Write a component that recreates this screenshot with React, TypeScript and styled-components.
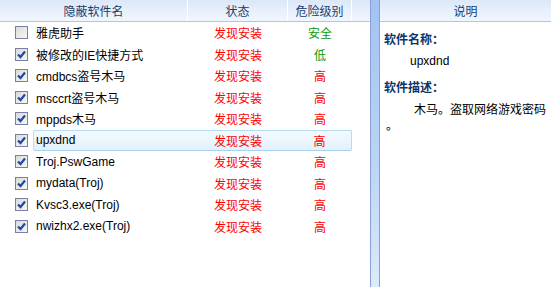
import styled, { createGlobalStyle } from "styled-components";
import { FC } from "react";

const GlobalStyle = createGlobalStyle`
  html, body {
    margin: 0;
    padding: 0;
    background: #ffffff;
  }
  body {
    font-family: "Liberation Sans", "Noto Sans CJK SC", sans-serif;
    font-size: 12px;
  }
`;

interface Item {
  name: string;
  checked: boolean;
  level: string;
  safe?: boolean;
  selected?: boolean;
}

const items: Item[] = [
  { name: "雅虎助手", checked: false, level: "安全", safe: true },
  { name: "被修改的IE快捷方式", checked: true, level: "低", safe: true },
  { name: "cmdbcs盗号木马", checked: true, level: "高" },
  { name: "msccrt盗号木马", checked: true, level: "高" },
  { name: "mppds木马", checked: true, level: "高" },
  { name: "upxdnd", checked: true, level: "高", selected: true },
  { name: "Troj.PswGame", checked: true, level: "高" },
  { name: "mydata(Troj)", checked: true, level: "高" },
  { name: "Kvsc3.exe(Troj)", checked: true, level: "高" },
  { name: "nwizhx2.exe(Troj)", checked: true, level: "高" },
];

const CheckBox: FC<{ checked: boolean }> = ({ checked }) => (
  <Box>
    {checked && (
      <svg width="9" height="9" viewBox="0 0 9 9">
        <path d="M1 4.5 L3.5 7 L8 1.5" stroke="#2148a8" strokeWidth="2.2" fill="none" />
      </svg>
    )}
  </Box>
);

export default function App() {
  return (
    <>
      <GlobalStyle />
      <Window>
        <ListPanel>
          <HeaderBar>
            <HeadCell $w={188}>隐蔽软件名</HeadCell>
            <HeadCell $w={100}>状态</HeadCell>
            <HeadCell $w={64}>危险级别</HeadCell>
            <HeadCell $w={18} />
          </HeaderBar>
          <Rows>
            {items.map((it) => (
              <Row key={it.name}>
                <NameCell>
                  <CheckBox checked={it.checked} />
                  <Name $selected={it.selected}>{it.name}</Name>
                </NameCell>
                <StatusCell $selected={it.selected}>发现安装</StatusCell>
                <LevelCell $safe={it.safe} $selected={it.selected}>
                  {it.level}
                </LevelCell>
              </Row>
            ))}
          </Rows>
        </ListPanel>
        <Splitter />
        <InfoPanel>
          <HeaderBar>
            <HeadCell $w={171}>说明</HeadCell>
          </HeaderBar>
          <InfoBody>
            <Label>软件名称：</Label>
            <Value>upxdnd</Value>
            <Label>软件描述：</Label>
            <Desc>木马。盗取网络游戏密码。</Desc>
          </InfoBody>
        </InfoPanel>
      </Window>
    </>
  );
}

const Window = styled.div`
  display: flex;
  width: 551px;
  height: 287px;
  background: #ffffff;
`;

const ListPanel = styled.div`
  width: 370px;
  display: flex;
  flex-direction: column;
`;

const InfoPanel = styled.div`
  flex: 1;
  display: flex;
  flex-direction: column;
`;

const Splitter = styled.div`
  width: 8px;
  border-left: 1px solid #8c9ed8;
  border-right: 1px solid #8c9ed8;
  background: linear-gradient(to bottom, #a2c2f2 0%, #b8d4f6 55%, #dceafc 100%);
`;

const HeaderBar = styled.div`
  display: flex;
  height: 22px;
  box-sizing: border-box;
  border-bottom: 1px solid #b4c4e8;
  background: linear-gradient(to bottom, #dce8f8 0%, #e8f0fb 55%, #f0f6fd 100%);
`;

const HeadCell = styled.div<{ $w: number }>`
  width: ${(p) => p.$w}px;
  flex: none;
  box-sizing: border-box;
  border-right: 1px solid #ffffff;
  display: flex;
  align-items: center;
  justify-content: center;
  color: #1a3c70;
  font-size: 12px;
  &:last-child {
    border-right: none;
    flex: 1;
  }
`;

const Rows = styled.div`
  display: flex;
  flex-direction: column;
`;

const Row = styled.div`
  display: grid;
  grid-template-columns: 188px 100px 64px;
  height: 21.5px;
  align-items: center;
`;

const NameCell = styled.div`
  display: flex;
  align-items: center;
  padding-left: 15px;
  gap: 8px;
  height: 100%;
`;

const Box = styled.div`
  width: 11px;
  height: 11px;
  border: 1px solid #7a7fa8;
  background: linear-gradient(135deg, #dcdcd6 0%, #f6f6f4 100%);
  display: flex;
  align-items: center;
  justify-content: center;
  flex: none;
`;

const selectedLook = `
  height: 19px;
  display: flex;
  align-items: center;
  background: linear-gradient(to bottom, #f4fafe 0%, #e2f1fc 100%);
  border-top: 1px solid #b4dcf4;
  border-bottom: 1px solid #a8d2f0;
`;

const Name = styled.div<{ $selected?: boolean }>`
  color: #000000;
  flex: 1;
  white-space: nowrap;
  ${(p) =>
    p.$selected &&
    `${selectedLook}
    margin-left: -3px;
    padding-left: 2px;
    border-left: 1px solid #b4dcf4;
    border-radius: 2px 0 0 2px;`}
`;

const StatusCell = styled.div<{ $selected?: boolean }>`
  color: #ff0000;
  text-align: center;
  justify-content: center;
  ${(p) => p.$selected && selectedLook}
`;

const LevelCell = styled.div<{ $safe?: boolean; $selected?: boolean }>`
  color: ${(p) => (p.$safe ? "#0a9a0a" : "#ff0000")};
  text-align: center;
  justify-content: center;
  ${(p) =>
    p.$selected &&
    `${selectedLook}
    border-right: 1px solid #b4dcf4;
    border-radius: 0 2px 2px 0;`}
`;

const InfoBody = styled.div`
  padding: 11px 4px 0 4px;
  display: flex;
  flex-direction: column;
`;

const Label = styled.div`
  font-weight: bold;
  color: #0c3466;
  font-size: 12px;
  line-height: 14px;
`;

const Value = styled.div`
  padding-left: 26px;
  margin: 7px 0 13px;
  line-height: 14px;
`;

const Desc = styled.div`
  margin-top: 7px;
  padding-left: 2px;
  text-indent: 28px;
  line-height: 16px;
  line-break: anywhere;
  word-break: break-all;
`;
